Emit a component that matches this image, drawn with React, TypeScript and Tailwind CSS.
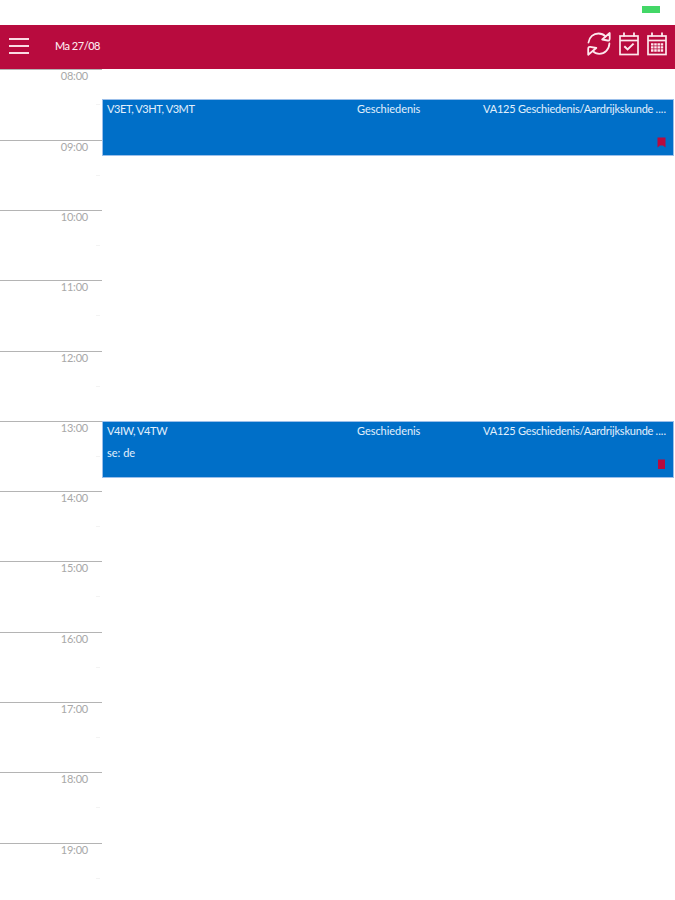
type Lesson = {
  groups: string
  subject: string
  room: string
  note?: string
  mark: 'bookmark' | 'book'
  place: string
}

const hours = [8, 9, 10, 11, 12, 13, 14, 15, 16, 17, 18, 19]

const lessons: Lesson[] = [
  {
    groups: 'V3ET, V3HT, V3MT',
    subject: 'Geschiedenis',
    room: 'VA125 Geschiedenis/Aardrijkskunde',
    mark: 'bookmark',
    place: 'mt-[30px] h-[57px]',
  },
  {
    groups: 'V4IW, V4TW',
    subject: 'Geschiedenis',
    room: 'VA125 Geschiedenis/Aardrijkskunde',
    note: 'se: de',
    mark: 'book',
    place: 'mt-[265px] h-[57px]',
  },
]

function formatHour(hour: number) {
  return `${String(hour).padStart(2, '0')}:00`
}

function RefreshIcon() {
  return (
    <svg width="24" height="24" viewBox="0 0 24 24" fill="none" stroke="currentColor" strokeWidth="1.8" strokeLinecap="round" strokeLinejoin="round">
      <path d="M1.500 10.500C2.200 5 6.500 1.500 11.500 1.500c3.200 0 5.300 1.100 7 3" />
      <path d="M22.700 1v5.600c0 1.600-.6 2.100-2 1.900l-5.500-1z" />
      <path d="M22.400 11.500c-.2 5.900-4.600 10.200-10.100 10.300-2.900 0-4.800-.9-6.500-2.700" />
      <path d="M1.200 22.700v-5.800c0-1.600.7-2.200 2.100-2l6 1.100z" />
    </svg>
  )
}

function CalendarIcon({ kind }: { kind: 'check' | 'grid' }) {
  return (
    <svg width="20" height="24" viewBox="0 0 20 24" fill="none" stroke="currentColor" strokeWidth="1.700">
      <rect x="1" y="4" width="18" height="18.500" />
      <path d="M1 8.500h18" />
      <path d="M5 .5v4M15 .5v4" strokeWidth="1.800" />
      {kind === 'check' ? (
        <path d="M5.300 14.300l3.300 3.100 6-5.800" strokeWidth="2" />
      ) : (
        <path d="M4 12.300h12.200M4 15.400h12.200M4 18.500h12.200" strokeWidth="2.300" strokeDasharray="2.500 0.730" />
      )}
    </svg>
  )
}

function LessonMark({ mark }: { mark: Lesson['mark'] }) {
  return (
    <svg width="9" height="11" viewBox="0 0 9 11" className="self-end text-[#b80b3e]" fill="currentColor">
      {mark === 'bookmark' ? <path d="M.5.500h8v10L6 8.500H3L.5 10.500z" /> : <path d="M1 .500h7v9.500H1z" />}
    </svg>
  )
}

function LessonBlock({ lesson }: { lesson: Lesson }) {
  return (
    <div className={`flex shrink-0 flex-col justify-between border border-[#9bbfea] bg-[#006fc8] pt-[2px] pr-[7px] pb-[7px] pl-[4px] text-[11px] leading-[14px] text-[#e2effc] ${lesson.place}`}>
      <div className="flex whitespace-nowrap">
        <span className="w-[250px] shrink-0 tracking-[-0.420px]">{lesson.groups}</span>
        <span className="w-[126px] shrink-0 tracking-[-0.050px]">{lesson.subject}</span>
        <span className="min-w-0 flex-1 tracking-[-0.200px]">{lesson.room}</span>
        <span>....</span>
      </div>
      <div className="flex h-[20px] justify-between">
        <span className="leading-[6px]">{lesson.note}</span>
        <LessonMark mark={lesson.mark} />
      </div>
    </div>
  )
}

export default function App() {
  return (
    <div className="flex h-[900px] w-[675px] flex-col overflow-hidden bg-white font-['Lato','Open_Sans',sans-serif]">
      <div className="flex h-[25px] shrink-0 justify-end pt-[6px] pr-[15px]">
        <div className="h-[7px] w-[18px] bg-[#43d767]" />
      </div>

      <header className="flex h-[44px] shrink-0 items-center bg-[#b80b3e] pr-[8px] pl-[9px] text-[#fde8ed]">
        <button className="flex w-[20px] flex-col gap-[5px] pb-[3px]" aria-label="Menu">
          <span className="h-[2px] bg-[#fbdce4]" />
          <span className="h-[2px] bg-[#fbdce4]" />
          <span className="h-[2px] bg-[#fbdce4]" />
        </button>
        <h1 className="ml-[26px] flex-1 pb-[2px] text-[11px] font-medium tracking-[-0.500px]">Ma 27/08</h1>
        <div className="flex gap-[8px] pb-[6px]">
          <RefreshIcon />
          <CalendarIcon kind="check" />
          <CalendarIcon kind="grid" />
        </div>
      </header>

      <main className="flex min-h-0 flex-1">
        <div className="w-[102px] shrink-0 pt-[0.400px]">
          {hours.map((hour) => (
            <div key={hour} className="flex h-[70.310px] flex-col items-end border-t border-[#b4b4b4] text-[11px] leading-[12px] tracking-[-0.200px] text-[#a8a8a8]">
              <span className="h-[34px] pr-[14px]">{formatHour(hour)}</span>
              <span className="mr-[2px] h-px w-[4px] bg-[#f3f3f3]" />
            </div>
          ))}
        </div>
        <div className="flex w-[572px] shrink-0 flex-col">
          {lessons.map((lesson) => (
            <LessonBlock key={lesson.groups} lesson={lesson} />
          ))}
        </div>
      </main>
    </div>
  )
}
